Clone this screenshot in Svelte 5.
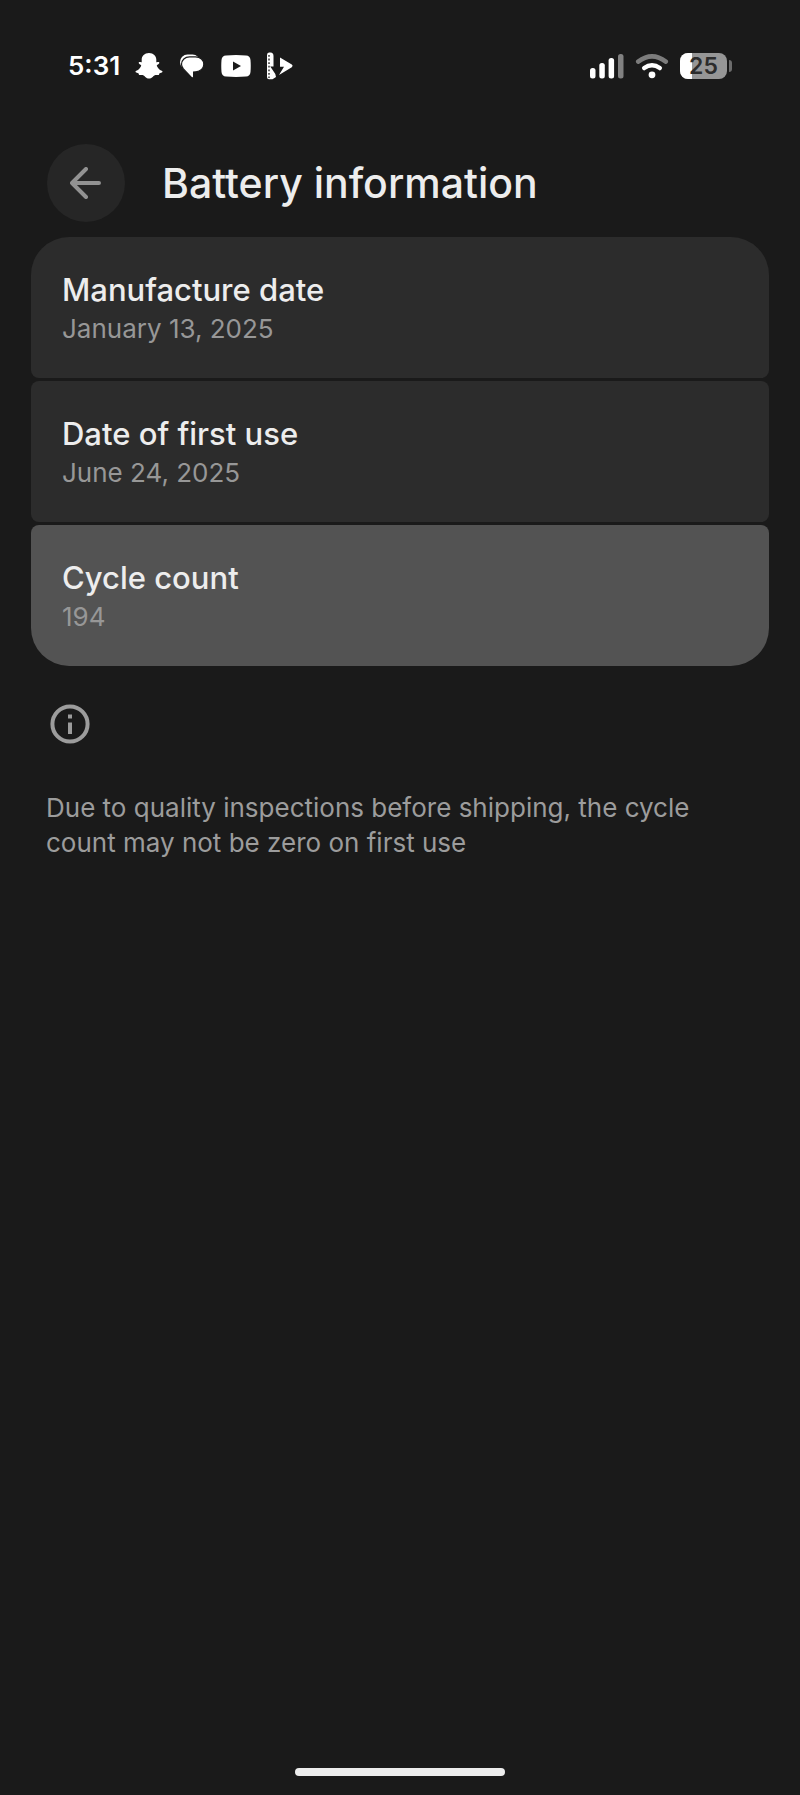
<script lang="ts">
  type Entry = { title: string; value: string; active?: boolean }

  const time = '5:31'
  const battery = 25

  const entries: Entry[] = [
    { title: 'Manufacture date', value: 'January 13, 2025' },
    { title: 'Date of first use', value: 'June 24, 2025' },
    { title: 'Cycle count', value: '194', active: true },
  ]
</script>

<div class="screen">
  <div class="status">
    <div class="status-side">
      <span class="clock">{time}</span>
      <svg width="28" height="28" viewBox="0 0 28 28" aria-hidden="true">
        <path
          fill="#fff"
          d="M14 1C9.500 1 6.800 4 6.700 7.600L6.700 10.200C5.800 10.600 4.700 9.700 3.900 10.300C3.200 11 4 12 5.900 12.900C6.300 13.100 6.300 13.500 6 14.200C4.900 16.500 3.200 18.200 .8 19C.3 19.300 .5 20.100 1.200 20.500C2.100 21 3.300 21.100 3.600 21.400C3.900 21.800 3.700 22.600 4.300 22.900C5.200 23.200 6.800 22.500 8.300 23.200C9.900 24 11.100 26.600 14 26.600S18.100 24 19.700 23.200C21.200 22.500 22.800 23.200 23.700 22.900C24.300 22.600 24.100 21.800 24.400 21.400C24.700 21.100 25.900 21 26.800 20.500C27.500 20.100 27.700 19.300 27.200 19C24.800 18.200 23.100 16.500 22 14.200C21.700 13.500 21.700 13.100 22.100 12.900C24 12 24.800 11 24.100 10.300C23.300 9.700 22.200 10.600 21.300 10.200L21.300 7.600C21.200 4 18.500 1 14 1Z"
        />
      </svg>
      <svg width="28" height="28" viewBox="0 0 28 28" aria-hidden="true">
        <rect x="2" y="2.500" width="20" height="15" rx="7.500" fill="#fff" />
        <path
          fill="#fff"
          stroke="#1a1a1a"
          stroke-width="1.200"
          d="M11.500 4.800H17.500C22.400 4.800 25.800 8 25.800 12.300C25.800 16.300 22.500 19.500 18 19.800L15.600 20V24.500C15.600 26 14.400 26.400 13.400 25.300L5.400 16.900C4.200 15.500 3.500 13.900 3.500 12.300C3.500 8 7 4.800 11.500 4.800Z"
        />
      </svg>
      <svg width="30" height="22" viewBox="0 0 30 22" aria-hidden="true">
        <path fill="#fff" fill-rule="evenodd" d="M5 .5Q15 -.3 25 .5Q29 .7 29.500 5Q30 11 29.500 17Q29 21.300 25 21.500Q15 22.300 5 21.500Q1 21.300 .5 17Q0 11 .5 5Q1 .7 5 .5ZM12 6.500V15.500L20 11Z" />
      </svg>
      <svg width="28" height="28" viewBox="0 0 28 28" aria-hidden="true">
        <path fill="#fff" d="M1 3Q1 .5 3 .5H4.500Q7.500 .8 7.500 4V14.500H4.300L9.300 22L10 25L6.500 27.300H3Q1 27.300 1 25Z" />
        <path fill="#fff" d="M14 5.500L25.800 12.500Q27.500 13.800 25.800 15.200L13 23L18 14.800H14Z" />
        <path stroke="#1a1a1a" stroke-width="1.300" stroke-dasharray="1.800 1.800" d="M3 3V26" />
      </svg>
    </div>

    <div class="status-side system">
      <svg width="34" height="26" viewBox="0 0 34 26" role="img" aria-label="Signal strength">
        <g fill="#fff">
          <rect x="0" y="15" width="5.500" height="10.500" rx="2.500" />
          <rect x="9.300" y="10" width="5.500" height="15.500" rx="2.500" />
          <rect x="18.600" y="5" width="5.500" height="20.500" rx="2.500" />
          <rect x="28" y="1" width="5.500" height="24.500" rx="2.500" opacity=".45" />
        </g>
      </svg>
      <svg width="34" height="26" viewBox="0 0 34 26" role="img" aria-label="Wi-Fi">
        <g fill="none" stroke="#fff" stroke-width="4.500" stroke-linecap="round">
          <path d="M3.200 8.600Q17 -1.800 30.800 8.600" stroke="#7c7c7c" />
          <path d="M9.200 15Q17 9.500 24.800 15" />
        </g>
        <circle cx="17" cy="21.800" r="3.400" fill="#fff" />
      </svg>
      <div class="battery">
        <div class="battery-body">
          <div class="battery-level" style:width="{battery}%"></div>
          <span class="battery-text">{battery}</span>
        </div>
        <div class="battery-tip"></div>
      </div>
    </div>
  </div>

  <header class="header">
    <button class="back" type="button" aria-label="Back">
      <svg width="32" height="32" viewBox="0 0 32 32" aria-hidden="true">
        <path d="M29 16H2M16 2L2 16L16 30" fill="none" stroke="#929292" stroke-width="4" stroke-linecap="round" stroke-linejoin="round" />
      </svg>
    </button>
    <h1>Battery information</h1>
  </header>

  <main>
    <dl class="list">
      {#each entries as entry}
        <div class="row" class:active={entry.active}>
          <dt>{entry.title}</dt>
          <dd>{entry.value}</dd>
        </div>
      {/each}
    </dl>

    <div class="note">
      <svg width="48" height="48" viewBox="0 0 24 24" aria-hidden="true">
        <circle cx="12" cy="12" r="8.800" fill="none" stroke="#9c9c9c" stroke-width="2" />
        <path fill="#9c9c9c" d="M11 7.200h2v2h-2zM11 11.200h2v5.800h-2z" />
      </svg>
      <p>Due to quality inspections before shipping, the cycle count may not be zero on first use</p>
    </div>
  </main>

  <div class="home-bar"></div>
</div>

<style>
  :global(body) {
    background: #1a1a1a;
  }
  .screen {
    box-sizing: border-box;
    min-height: 100vh;
    display: flex;
    flex-direction: column;
    padding: 40px 31px 19px;
    background: #1a1a1a;
    color: #ededed;
    font-family: Inter, Roboto, sans-serif;
  }

  .status {
    display: flex;
    align-items: center;
    justify-content: space-between;
    height: 51px;
    padding: 0 37px;
  }
  .status-side {
    display: flex;
    align-items: center;
    gap: 15px;
  }
  .system {
    gap: 11px;
  }
  .clock {
    color: #fff;
    font-size: 26px;
    font-weight: 600;
    line-height: 32px;
  }
  .battery {
    display: flex;
    align-items: center;
    gap: 2px;
  }
  .battery-body {
    position: relative;
    width: 47px;
    height: 26px;
    border-radius: 8px;
    background: #969696;
    overflow: hidden;
  }
  .battery-level {
    height: 100%;
    background: #fff;
  }
  .battery-text {
    position: absolute;
    inset: 0;
    color: #2c2c2c;
    font-size: 23px;
    font-weight: 600;
    line-height: 26px;
    text-align: center;
  }
  .battery-tip {
    width: 3px;
    height: 12px;
    border-radius: 0 3px 3px 0;
    background: #6c6c6c;
  }

  .header {
    display: flex;
    align-items: center;
    gap: 37px;
    margin: 53px 16px 15px;
  }
  .back {
    display: grid;
    place-items: center;
    flex: none;
    width: 78px;
    height: 78px;
    padding: 0;
    border: 0;
    border-radius: 50%;
    background: #262626;
    cursor: pointer;
  }
  h1 {
    margin: 0;
    font-size: 41px;
    font-weight: 500;
    line-height: 50px;
  }

  .list {
    display: flex;
    flex-direction: column;
    gap: 3px;
    margin: 0;
  }
  .row {
    padding: 32px 31px 31px;
    border-radius: 8px;
    background: #2c2c2c;
  }
  .row:first-child {
    border-top-left-radius: 38px;
    border-top-right-radius: 38px;
  }
  .row:last-child {
    border-bottom-left-radius: 38px;
    border-bottom-right-radius: 38px;
  }
  .row.active {
    background: #535353;
  }
  dt {
    font-size: 31px;
    font-weight: 500;
    line-height: 42px;
  }
  dd {
    margin: 0;
    color: #979797;
    font-size: 26px;
    line-height: 36px;
  }

  .note {
    margin: 34px 15px;
    color: #9c9c9c;
  }
  .note svg {
    display: block;
  }
  .note p {
    margin: 42px 0 0;
    font-size: 26px;
    line-height: 35px;
  }

  .home-bar {
    align-self: center;
    width: 210px;
    height: 8px;
    margin-top: auto;
    border-radius: 4px;
    background: #ededed;
  }
</style>
